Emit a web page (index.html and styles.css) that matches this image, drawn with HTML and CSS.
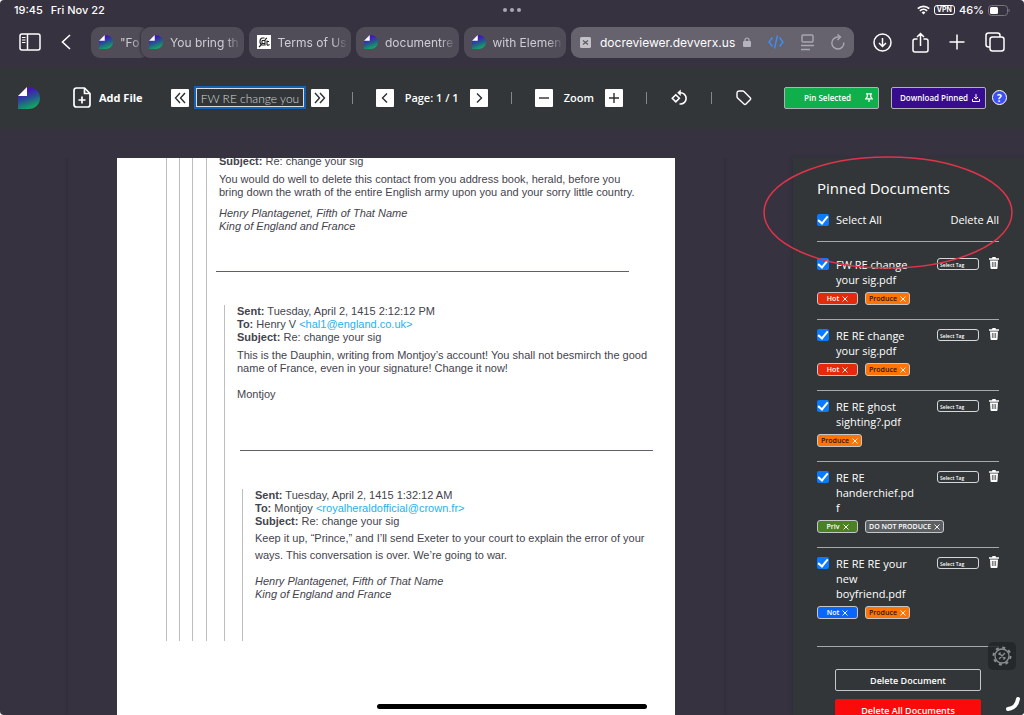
FILE: index.html
```html
<!DOCTYPE html>
<html lang="en">
<head>
  <meta charset="UTF-8" />
  <meta name="viewport" content="width=device-width, initial-scale=1.0"/>
  <title>Document Reviewer</title>
  <link rel="stylesheet" href="styles.css">
</head>
<body>
  <!-- Shared icons -->
  <svg class="sprite" aria-hidden="true">
    <defs>
      <linearGradient id="logo-fill" x1="0.3" y1="0.1" x2="0.65" y2="1">
        <stop offset="0.1" stop-color="#4416b8"/>
        <stop offset="0.5" stop-color="#27558f"/>
        <stop offset="1" stop-color="#0cb45a"/>
      </linearGradient>
      <symbol id="logo" viewBox="0 0 22 22">
        <path d="M9 0C17 0 22 4.500 22 11S17 22 10 22H0V9z" fill="url(#logo-fill)"/>
        <path d="M9 0v9H0z" fill="#fff"/>
      </symbol>
      <symbol id="trash" viewBox="0 0 10 12">
        <path d="M3.500 0h3l.5 1.200h3v1.600H0V1.200h3z" fill="#fff"/>
        <path d="M1 3.500h8l-.5 7.500q0 1-1 1h-5q-1 0-1-1z" fill="#fff"/>
        <path d="M3.400 5v5M5 5v5M6.600 5v5" stroke="#323638" stroke-width=".7"/>
      </symbol>
      <symbol id="cross" viewBox="0 0 6 6">
        <path d="M.5.5l5 5M5.500.5l-5 5" stroke="#fff" stroke-width=".9" fill="none"/>
      </symbol>
    </defs>
  </svg>

  <header class="browser">
    <div class="status">
      <div class="status-left"><span>19:45</span><span>Fri Nov 22</span></div>
      <div class="dots"><i></i><i></i><i></i></div>
      <div class="status-right">
        <svg width="13" height="10" viewBox="0 0 13 10" fill="none" stroke="#fff" stroke-width="1.800"><path d="M.8 3.600a8.200 8.200 0 0 1 11.400 0M2.900 5.900a5.200 5.200 0 0 1 7.200 0"/><path d="M6.500 9.500L4.600 7.500a2.700 2.700 0 0 1 3.800 0z" fill="#fff" stroke="none"/></svg>
        <span class="vpn">VPN</span>
        <span>46%</span>
        <svg width="22" height="11" viewBox="0 0 22 11"><rect x=".5" y=".5" width="19" height="10" rx="3" fill="none" stroke="#77737e"/><rect x="2" y="2" width="8" height="7" rx="1.500" fill="#fff"/><path d="M21 4v3" stroke="#77737e"/></svg>
      </div>
    </div>

    <nav class="tabs">
      <button class="bare" aria-label="Show sidebar">
        <svg width="22" height="18" viewBox="0 0 22 18" fill="none" stroke="#fff" stroke-width="1.500"><rect x="1" y="1" width="20" height="16" rx="2"/><path d="M8.500 1v16"/><path d="M3 4.500h3.500M3 7h3.500M3 9.500h3.500" stroke-width="1"/></svg>
      </button>
      <button class="bare back" aria-label="Back">
        <svg width="10" height="16" viewBox="0 0 10 16" fill="none" stroke="#fff" stroke-width="1.600"><path d="M9 1L1.500 8 9 15"/></svg>
      </button>

      <div class="tab-list">
        <a href="#" class="tab tab-first"><svg class="favicon"><use href="#logo"/></svg><span>"Fo</span></a>
        <a href="#" class="tab tab-over"><svg class="favicon"><use href="#logo"/></svg><span>You bring th</span></a>
        <a href="#" class="tab">
          <svg class="favicon" viewBox="0 0 14 14"><rect width="14" height="14" fill="#fff"/><path d="M7.500 3H5.200Q3 3.600 3 6.500T5.200 10H8V5.500q0-1.500 2-2.500M5 5.500h3M5 5.500v3h3M10 5.500v4.500M10 10q1.500.5 2.500-.5M12 6.500h-1.500M2 12l2-2" fill="none" stroke="#222" stroke-width="1.100"/></svg>
          <span>Terms of Us</span>
        </a>
        <a href="#" class="tab"><svg class="favicon"><use href="#logo"/></svg><span>documentre</span></a>
        <a href="#" class="tab"><svg class="favicon"><use href="#logo"/></svg><span>with Elemen</span></a>
      </div>

      <div class="address">
        <svg width="11" height="11" viewBox="0 0 11 11"><rect width="11" height="11" rx="1.500" fill="#c4c2c9"/><path d="M3 3.500l5 4M8 3.500l-5 4" stroke="#5b5864" stroke-width="1.200"/></svg>
        <span class="url">docreviewer.devverx.us</span>
        <svg width="8" height="10" viewBox="0 0 8 10"><rect y="4" width="8" height="6" rx="1" fill="#b6b4bc"/><path d="M2 4.500V3a2 2 0 0 1 4 0v1.500" fill="none" stroke="#b6b4bc" stroke-width="1.200"/></svg>
        <div class="address-tools">
          <svg width="16" height="14" viewBox="0 0 16 14" fill="none" stroke="#3d8ff5" stroke-width="1.400"><path d="M4.500 2.500L1 7l3.500 4.500M11.500 2.500L15 7l-3.500 4.500M9.500.5l-3 13"/></svg>
          <svg width="13" height="17" viewBox="0 0 13 17" fill="none" stroke="#a9a7b0" stroke-width="1.400"><rect x="1" y="1" width="11" height="7" rx="1"/><path d="M0 11.500h13M0 15.500h9"/></svg>
          <svg width="14" height="16" viewBox="0 0 14 16" fill="none" stroke="#a9a7b0" stroke-width="1.400"><path d="M12.800 8.500A6 6 0 1 1 7 3h2"/><path d="M6.500.5L9.500 3 6.500 6"/></svg>
        </div>
      </div>

      <div class="browser-tools">
        <button class="bare" aria-label="Downloads"><svg width="19" height="19" viewBox="0 0 19 19" fill="none" stroke="#fff" stroke-width="1.500"><circle cx="9.500" cy="9.500" r="8.500"/><path d="M9.500 5v8.500M6 10l3.500 3.500L13 10"/></svg></button>
        <button class="bare" aria-label="Share"><svg width="17" height="21" viewBox="0 0 17 21" fill="none" stroke="#fff" stroke-width="1.500"><path d="M5.500 7H3Q1 7 1 9v9q0 2 2 2h11q2 0 2-2V9q0-2-2-2h-2.500M8.500 14V1.500M5 5l3.500-3.500L12 5"/></svg></button>
        <button class="bare" aria-label="New tab"><svg width="16" height="16" viewBox="0 0 16 16" fill="none" stroke="#fff" stroke-width="1.500"><path d="M8 .5v15M.5 8h15"/></svg></button>
        <button class="bare" aria-label="All tabs"><svg width="20" height="20" viewBox="0 0 20 20" fill="none" stroke="#fff" stroke-width="1.500"><rect x="5" y="5" width="14" height="14" rx="2.500"/><path d="M5 15H3.500Q1 15 1 12.500v-9Q1 1 3.500 1h9Q15 1 15 3.500V5"/></svg></button>
      </div>
    </nav>
  </header>

  <div class="toolbar">
    <svg class="logo"><use href="#logo"/></svg>
    <button class="bare add-file">
      <svg width="18" height="21" viewBox="0 0 18 21" fill="none" stroke="#fff" stroke-width="1.700" stroke-linejoin="round"><path d="M11.500 1H3.500Q1 1 1 3.500v14Q1 20 3.500 20h11q2.500 0 2.500-2.500V6.500z"/><path d="M11.500 1v5.500H17M9 9.500v7M5.500 13h7"/></svg>
      Add File
    </button>
    <div class="file-nav">
      <button class="square" aria-label="Previous file"><svg width="12" height="12" viewBox="0 0 12 12"><path d="M6 1L1.500 6 6 11M11 1L6.500 6l4.500 5"/></svg></button>
      <input type="text" class="file-name" value="FW RE change you" aria-label="File name" />
      <button class="square" aria-label="Next file"><svg width="12" height="12" viewBox="0 0 12 12"><path d="M1 1l4.500 5L1 11M6 1l4.500 5L6 11"/></svg></button>
    </div>
    <span class="divider"></span>
    <div class="tool-group">
      <button class="square" aria-label="Previous page"><svg width="12" height="12" viewBox="0 0 12 12"><path d="M8 1.500L3.500 6 8 10.500"/></svg></button>
      <span>Page: 1 / 1</span>
      <button class="square" aria-label="Next page"><svg width="12" height="12" viewBox="0 0 12 12"><path d="M4 1.500L8.500 6 4 10.500"/></svg></button>
    </div>
    <span class="divider"></span>
    <div class="tool-group">
      <button class="square" aria-label="Zoom out"><svg width="12" height="12" viewBox="0 0 12 12"><path d="M1 6h10"/></svg></button>
      <span>Zoom</span>
      <button class="square" aria-label="Zoom in"><svg width="12" height="12" viewBox="0 0 12 12"><path d="M1 6h10M6 1v10"/></svg></button>
    </div>
    <span class="divider"></span>
    <button class="bare" aria-label="Rotate"><svg width="18" height="18" viewBox="0 0 18 18" fill="none" stroke="#fff" stroke-width="1.600"><path d="M5.800 5.800L9.300 9.300l-3.500 3.500-3.500-3.500z"/><path d="M9 3.800h1.500a5.600 5.600 0 0 1 0 11.200H9.500"/><path d="M10.500 1L7.500 3.800l3 2.700z" fill="#fff" stroke-width=".5"/></svg></button>
    <span class="divider"></span>
    <button class="bare" aria-label="Tag"><svg width="17" height="17" viewBox="0 0 17 17" fill="none" stroke="#fff" stroke-width="1.400" stroke-linejoin="round"><path d="M2 4.500Q2 2 4.500 2h3.200q.8 0 1.300.6l6.200 6.200q1 1 0 2l-4.200 4.200q-1 1-2 0L2.600 9Q2 8.500 2 7.500z"/></svg></button>
    <div class="actions">
      <button class="action pin">Pin Selected
        <svg width="8" height="9" viewBox="0 0 8 9" fill="none" stroke="#fff" stroke-width="1.200"><path d="M1 .8h6M2.300 1v2.700L.8 5.800h6.400L5.700 3.700V1M4 6v3"/></svg>
      </button>
      <button class="action download">Download Pinned
        <svg width="8" height="8" viewBox="0 0 8 8" fill="none" stroke="#fff"><path d="M4 0v5M2 3l2 2.200L6 3M.5 5v2.500h7V5"/></svg>
      </button>
      <button class="help" aria-label="Help">?</button>
    </div>
  </div>

  <main>
    <section class="viewer">
      <article class="page">
        <blockquote><blockquote><blockquote><blockquote class="message">
          <p><b>Subject:</b> Re: change your sig</p>
          <p class="body">You would do well to delete this contact from you address book, herald, before you<br>bring down the wrath of the entire English army upon you and your sorry little country.</p>
          <p class="signature">Henry Plantagenet, Fifth of That Name<br>King of England and France</p>
          <hr>
          <blockquote class="message">
            <p><b>Sent:</b> Tuesday, April 2, 1415 2:12:12 PM<br><b>To:</b> Henry V <a href="#">&lt;hal1@england.co.uk&gt;</a><br><b>Subject:</b> Re: change your sig</p>
            <p class="body">This is the Dauphin, writing from Montjoy’s account! You shall not besmirch the good<br>name of France, even in your signature! Change it now!<br><br>Montjoy</p>
            <hr class="late">
            <blockquote class="message last">
              <p><b>Sent:</b> Tuesday, April 2, 1415 1:32:12 AM<br><b>To:</b> Montjoy <a href="#">&lt;royalheraldofficial@crown.fr&gt;</a><br><b>Subject:</b> Re: change your sig</p>
              <p class="loose">Keep it up, “Prince,” and I’ll send Exeter to your court to explain the error of your<br>ways. This conversation is over. We’re going to war.</p>
              <p class="signature">Henry Plantagenet, Fifth of That Name<br>King of England and France</p>
            </blockquote>
          </blockquote>
        </blockquote></blockquote></blockquote></blockquote>
      </article>
    </section>

    <aside class="sidebar">
      <h1>Pinned Documents</h1>
      <div class="select-all">
        <input type="checkbox" id="all" checked />
        <label for="all">Select All</label>
        <button class="bare">Delete All</button>
      </div>

      <ul class="docs">
        <li>
          <div class="doc-row">
            <input type="checkbox" id="doc1" checked />
            <label for="doc1">FW RE change your sig.pdf</label>
            <select aria-label="Tag"><option>Select Tag</option></select>
            <button class="bare" aria-label="Delete"><svg class="trash"><use href="#trash"/></svg></button>
          </div>
          <div class="tags">
            <button class="tag hot">Hot <svg><use href="#cross"/></svg></button>
            <button class="tag produce">Produce <svg><use href="#cross"/></svg></button>
          </div>
        </li>
        <li>
          <div class="doc-row">
            <input type="checkbox" id="doc2" checked />
            <label for="doc2">RE RE change your sig.pdf</label>
            <select aria-label="Tag"><option>Select Tag</option></select>
            <button class="bare" aria-label="Delete"><svg class="trash"><use href="#trash"/></svg></button>
          </div>
          <div class="tags">
            <button class="tag hot">Hot <svg><use href="#cross"/></svg></button>
            <button class="tag produce">Produce <svg><use href="#cross"/></svg></button>
          </div>
        </li>
        <li>
          <div class="doc-row">
            <input type="checkbox" id="doc3" checked />
            <label for="doc3">RE RE ghost sighting?.pdf</label>
            <select aria-label="Tag"><option>Select Tag</option></select>
            <button class="bare" aria-label="Delete"><svg class="trash"><use href="#trash"/></svg></button>
          </div>
          <div class="tags">
            <button class="tag produce">Produce <svg><use href="#cross"/></svg></button>
          </div>
        </li>
        <li>
          <div class="doc-row">
            <input type="checkbox" id="doc4" checked />
            <label for="doc4">RE RE handerchief.pdf</label>
            <select aria-label="Tag"><option>Select Tag</option></select>
            <button class="bare" aria-label="Delete"><svg class="trash"><use href="#trash"/></svg></button>
          </div>
          <div class="tags">
            <button class="tag priv">Priv <svg><use href="#cross"/></svg></button>
            <button class="tag withhold">DO NOT PRODUCE <svg><use href="#cross"/></svg></button>
          </div>
        </li>
        <li>
          <div class="doc-row">
            <input type="checkbox" id="doc5" checked />
            <label for="doc5">RE RE RE your new boyfriend.pdf</label>
            <select aria-label="Tag"><option>Select Tag</option></select>
            <button class="bare" aria-label="Delete"><svg class="trash"><use href="#trash"/></svg></button>
          </div>
          <div class="tags">
            <button class="tag not">Not <svg><use href="#cross"/></svg></button>
            <button class="tag produce">Produce <svg><use href="#cross"/></svg></button>
          </div>
        </li>
      </ul>

      <div class="delete-buttons">
        <button class="delete">Delete Document</button>
        <button class="delete delete-all">Delete All Documents</button>
      </div>
    </aside>
  </main>

  <!-- Overlays -->
  <svg class="circle-mark" viewBox="0 0 250 113" fill="none" stroke="#e0344a" stroke-width="1.500"><ellipse cx="125" cy="56.500" rx="124" ry="55.500"/></svg>
  <button class="gear" aria-label="Settings">
    <svg width="20" height="20" viewBox="0 0 20 20" fill="none" stroke="#8b8e90" stroke-width="1.300"><circle cx="10" cy="10" r="7"/><circle cx="10" cy="10" r="8.500" stroke-width="2" stroke-dasharray="3 3.675"/><path d="M7 7l6 6M13 7l-6 6M6.500 8.500l2-2M11.500 13.500l2-2"/></svg>
  </button>
  <svg class="corner" width="14" height="14" viewBox="0 0 14 14" fill="none" stroke="#fff" stroke-width="4" stroke-linecap="round"><path d="M2 12Q10.500 11 12 2"/></svg>
  <div class="home-bar"></div>
</body>
</html>
```
FILE: styles.css
```css
* {
  box-sizing: border-box;
  margin: 0;
  padding: 0;
}

html {
  background: #fff;
}

body {
  position: relative;
  height: 100vh;
  display: flex;
  flex-direction: column;
  overflow: hidden;
  border-radius: 4px;
  background: #363240;
  color: #fff;
  font-family: "Open Sans", sans-serif;
  font-size: 11px;
}

svg {
  display: block;
  flex-shrink: 0;
}

button, input, select {
  font-family: inherit;
  font-size: inherit;
  color: inherit;
}

button {
  cursor: pointer;
}

.sprite {
  position: absolute;
  width: 0;
  height: 0;
}

.bare {
  background: none;
  border: none;
}

/* Browser bar */
.browser {
  font-family: Inter, sans-serif;
}

.status {
  height: 20px;
  padding: 0 14px;
  display: grid;
  grid-template-columns: 1fr auto 1fr;
  align-items: center;
  font-weight: 500;
}

.status-left {
  display: flex;
  gap: 8px;
}

.status-right {
  display: flex;
  justify-content: flex-end;
  align-items: center;
  gap: 4px;
}

.vpn {
  border: 1px solid #fff;
  border-radius: 3px;
  padding: 0 2px;
  font-size: 7px;
  line-height: 8px;
  font-weight: 700;
}

.dots {
  display: flex;
  gap: 3px;
}

.dots i {
  width: 4px;
  height: 4px;
  border-radius: 50%;
  background: #aaa8b2;
}

.tabs {
  height: 48px;
  padding: 0 19px 4px;
  display: flex;
  align-items: center;
}

.back {
  margin: 0 20px;
}

.tab-list {
  flex: 1;
  min-width: 0;
  display: flex;
  gap: 5px;
}

.tab {
  flex: 1 1 0;
  min-width: 0;
  height: 31px;
  padding: 0 3px 0 8px;
  display: flex;
  align-items: center;
  gap: 7px;
  border-radius: 9px;
  background: #504d59;
  color: #cfcdd4;
  font-size: 12px;
  text-decoration: none;
}

.tab span {
  flex: 1;
  overflow: hidden;
  white-space: nowrap;
  -webkit-mask-image: linear-gradient(to left, transparent, #000 16px);
  mask-image: linear-gradient(to left, transparent, #000 16px);
}

.tab-first {
  flex: 0 0 58px;
}

.tab-over {
  margin-left: -13px;
  box-shadow: -1px 0 2px #363240;
}

.favicon {
  width: 14px;
  height: 14px;
}

.address {
  width: 283px;
  height: 31px;
  margin: 0 19px 0 5px;
  padding: 0 9px;
  display: flex;
  align-items: center;
  border-radius: 9px;
  background: #66636f;
  font-size: 12px;
}

.url {
  margin: 0 8px 0 9px;
}

.address-tools {
  margin-left: auto;
  display: flex;
  align-items: center;
  gap: 17px;
}

.browser-tools {
  display: flex;
  align-items: center;
  gap: 20px;
}

/* Toolbar */
.toolbar {
  height: 61px;
  padding: 0 17px 2px 18px;
  display: flex;
  align-items: center;
  gap: 23px;
  background: #323638;
  font-weight: 600;
  white-space: nowrap;
}

.logo {
  width: 22px;
  height: 22px;
  margin-right: 10px;
}

.add-file {
  display: flex;
  align-items: center;
  gap: 8px;
  font-weight: 700;
}

.file-nav {
  display: flex;
  align-items: center;
  gap: 7px;
  margin-left: 5px;
}

.square {
  width: 18px;
  height: 18px;
  display: flex;
  align-items: center;
  justify-content: center;
  border: none;
  border-radius: 1px;
  background: #fff;
}

.square path {
  fill: none;
  stroke: #2b2e30;
  stroke-width: 1.4;
}

.file-name {
  width: 108px;
  height: 19px;
  padding: 2px 4px 0;
  border: 1px solid #ddd;
  outline: 2px solid #1263b8;
  outline-offset: 0;
  background: #323638;
  color: #d5d7d8;
  font-family: Lato, sans-serif;
  font-size: 12px;
  font-weight: 300;
}

.divider {
  width: 1px;
  height: 12px;
  background: #84888a;
}

.tool-group {
  display: flex;
  align-items: center;
  gap: 11px;
}

.actions {
  margin-left: auto;
  display: flex;
  align-items: center;
  gap: 12px;
}

.action {
  width: 95px;
  height: 22px;
  padding: 0 5px;
  display: flex;
  align-items: center;
  justify-content: flex-end;
  gap: 4px;
  border: 1px solid #aeb4b4;
  border-radius: 2px;
  font-size: 8px;
  font-weight: 600;
}

.pin {
  background: #0fb04c;
  gap: 14px;
}

.download {
  background: #380c8e;
}

.help {
  width: 15px;
  height: 15px;
  margin-left: -6px;
  border: 1px solid #fff;
  border-radius: 50%;
  background: #3d50f5;
  font-size: 10px;
  line-height: 12px;
  font-weight: 700;
}

/* Main area */
main {
  flex: 1;
  min-height: 0;
  display: flex;
  padding: 29px 0 0 68px;
}

.viewer {
  flex: 1;
  min-width: 0;
  margin-right: 69px;
  padding: 0 49px;
  box-shadow: 0 0 3px #2a2732;
  clip-path: inset(0 -6px);
}

.page {
  height: 100%;
  padding-left: 49px;
  overflow: hidden;
  background: #fff;
  color: #44434d;
  font-family: "Liberation Sans", sans-serif;
  font-size: 11px;
  line-height: 13px;
  white-space: nowrap;
}

.page > blockquote {
  margin-top: -3px;
}

.page blockquote {
  border-left: 1px solid #bdbdc0;
  padding-left: 12px;
}

.page .message {
  margin-left: 1px;
}

.page .message .message {
  margin-left: 5px;
}

.page a {
  color: #1fb1ee;
  text-decoration: none;
}

.body {
  margin-top: 5px;
}

.loose {
  margin-top: 2px;
  line-height: 17px;
}

.signature {
  margin-top: 8px;
  font-style: italic;
}

.loose + .signature {
  margin-top: 11px;
}

.page hr {
  width: 413px;
  margin: 38px 0 33px -3px;
  border: none;
  border-top: 1px solid #62606b;
}

.page hr.late {
  margin: 49px 0 38px 3px;
}

.last {
  padding-bottom: 40px;
}

/* Sidebar */
.sidebar {
  width: 231px;
  padding: 20px 25px 0 24px;
  background: #323638;
  box-shadow: -1px 0 3px #2f2e38;
  line-height: 15px;
  overflow: hidden;
}

.sidebar h1 {
  font-size: 15px;
  line-height: 20px;
  font-weight: 500;
}

.select-all {
  display: flex;
  align-items: center;
  padding: 14px 0;
  border-bottom: 1px solid #a6a9ab;
}

.select-all .bare {
  margin-left: auto;
  line-height: 15px;
}

input[type="checkbox"] {
  appearance: none;
  width: 12px;
  height: 12px;
  margin: 1px 7px 0 0;
  flex-shrink: 0;
  border-radius: 2px;
  background: #0a7aff;
  display: grid;
  place-items: center;
}

input[type="checkbox"]:checked::after {
  content: "";
  width: 4px;
  height: 8px;
  border: solid #fff;
  border-width: 0 2px 2px 0;
  transform: translateY(-1px) rotate(40deg);
}

.docs {
  list-style: none;
  padding-top: 7px;
}

.docs li {
  padding: 8px 0 14px;
  border-bottom: 1px solid #a6a9ab;
}

.docs li:last-child {
  padding-bottom: 27px;
}

.doc-row {
  display: flex;
  align-items: flex-start;
}

.doc-row label {
  flex: 1;
  min-width: 0;
  overflow-wrap: anywhere;
}

.doc-row select {
  appearance: none;
  width: 42px;
  height: 12px;
  margin: 1px 10px 0 20px;
  padding: 3px 2px 0;
  border: 1px solid #d5d7d8;
  border-radius: 3px;
  background: transparent;
  font-size: 5px;
  line-height: 7px;
  font-weight: 600;
}

.trash {
  width: 10px;
  height: 12px;
}

.tags {
  display: flex;
  gap: 7px;
  margin-top: 5px;
}

.tag {
  min-width: 41px;
  height: 13px;
  padding: 0 3px;
  display: flex;
  align-items: center;
  justify-content: center;
  gap: 3px;
  border: 1px solid #c4c6c7;
  border-radius: 3px;
  font-size: 7px;
  font-weight: 600;
}

.tag svg {
  width: 6px;
  height: 6px;
}

.hot {
  background: #e52a0b;
}

.produce {
  background: #ff7404;
  color: #2a1804;
}

.priv {
  background: #4b8023;
}

.withhold {
  background: #5d6062;
}

.not {
  background: #0a66fa;
}

.delete-buttons {
  display: flex;
  flex-direction: column;
  gap: 8px;
  padding: 22px 18px 0;
}

.delete {
  height: 22px;
  border: 1px solid #c4c6c7;
  border-radius: 2px;
  background: transparent;
  font-size: 9px;
  font-weight: 600;
}

.delete-all {
  border-color: #fa0a0a;
  background: #fa0a0a;
}

/* Overlays */
.circle-mark {
  position: absolute;
  top: 156px;
  right: 11px;
  width: 250px;
  height: 113px;
  pointer-events: none;
}

.gear {
  position: absolute;
  right: 8px;
  bottom: 45px;
  width: 28px;
  height: 28px;
  display: grid;
  place-items: center;
  border: none;
  border-radius: 5px;
  background: rgba(35, 38, 40, 0.85);
}

.corner {
  position: absolute;
  right: 4px;
  bottom: 4px;
}

.home-bar {
  position: absolute;
  left: 50%;
  bottom: 6px;
  width: 270px;
  height: 5px;
  margin-left: -135px;
  border-radius: 3px;
  background: #000;
}
```
